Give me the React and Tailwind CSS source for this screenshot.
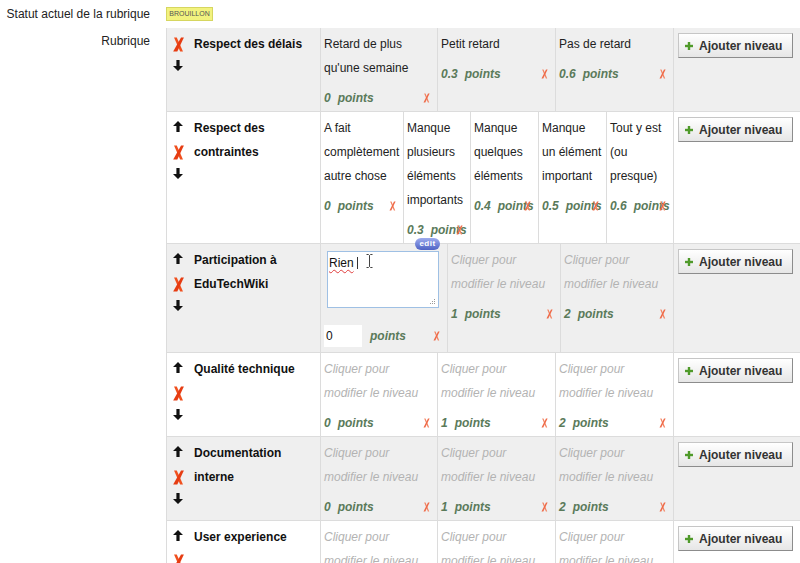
import React from "react";

const BigX = () => (
  <svg width="11" height="15" viewBox="0 0 11 15">
    <path d="M1 0.6 L3.8 0.6 L10 14.4 L7.2 14.4 Z" fill="#f0501e" />
    <path d="M8 0.4 L10.9 0.4 L4.3 14.6 L0.2 14.6 Z" fill="#e63c12" />
  </svg>
);

const SmallX = () => (
  <svg width="7" height="10" viewBox="0 0 7 10">
    <path d="M1.2 0.5 L2.5 0.5 L6.2 9.5 L4.9 9.5 Z" fill="#f3805e" />
    <path d="M5 0.5 L6.6 0.5 L2.3 9.5 L0.5 9.5 Z" fill="#ef6a48" />
  </svg>
);

const UpArrow = () => (
  <svg width="10" height="11" viewBox="0 0 10 11">
    <path d="M5 0 L10 5 L6.6 5 L6.6 11 L3.4 11 L3.4 5 L0 5 Z" fill="#111" />
  </svg>
);

const DownArrow = () => (
  <svg width="10" height="11" viewBox="0 0 10 11">
    <path d="M5 11 L10 6 L6.6 6 L6.6 0 L3.4 0 L3.4 6 L0 6 Z" fill="#111" />
  </svg>
);

const Plus = () => (
  <svg width="8" height="8" viewBox="0 0 8 8">
    <rect x="2.8" y="0" width="2.4" height="8" fill="#4f9a2a" />
    <rect x="0" y="2.8" width="8" height="2.4" fill="#4f9a2a" />
  </svg>
);

const IBeam = () => (
  <svg width="7" height="14" viewBox="0 0 7 14">
    <path
      d="M0.5 0.5 H2.5 L3.5 1.5 L4.5 0.5 H6.5 M3.5 1.5 V12.5 M0.5 13.5 H2.5 L3.5 12.5 L4.5 13.5 H6.5"
      stroke="#444"
      fill="none"
      strokeWidth="1"
    />
  </svg>
);

const Grip = () => (
  <svg width="6" height="6" viewBox="0 0 6 6">
    <rect x="4" y="0" width="1" height="1" fill="#999" />
    <rect x="2" y="2" width="1" height="1" fill="#999" />
    <rect x="4" y="2" width="1" height="1" fill="#999" />
    <rect x="0" y="4" width="1" height="1" fill="#999" />
    <rect x="2" y="4" width="1" height="1" fill="#999" />
    <rect x="4" y="4" width="1" height="1" fill="#999" />
  </svg>
);

const PH = ["Cliquer pour", "modifier le niveau"];

const rows = [
  {
    name: ["Respect des délais"],
    up: false,
    gray: true,
    levels: [
      { w: "w-[117px]", lines: ["Retard de plus", "qu'une semaine"], p: "0" },
      { w: "w-[118px]", lines: ["Petit retard"], p: "0.3" },
      { w: "w-[118px]", lines: ["Pas de retard"], p: "0.6" },
    ],
  },
  {
    name: ["Respect des", "contraintes"],
    up: true,
    gray: false,
    levels: [
      { w: "w-[83px]", lines: ["A fait", "complètement", "autre chose"], p: "0" },
      { w: "w-[67px]", lines: ["Manque", "plusieurs", "éléments", "importants"], p: "0.3" },
      { w: "w-[68px]", lines: ["Manque", "quelques", "éléments"], p: "0.4" },
      { w: "w-[68px]", lines: ["Manque", "un élément", "important"], p: "0.5" },
      { w: "w-[67px]", lines: ["Tout y est", "(ou", "presque)"], p: "0.6" },
    ],
  },
  {
    name: ["Participation à", "EduTechWiki"],
    up: true,
    gray: true,
    edit: true,
    levels: [
      { w: "w-[113px]", lines: PH, p: "1", ph: true },
      { w: "w-[113px]", lines: PH, p: "2", ph: true },
    ],
  },
  {
    name: ["Qualité technique"],
    up: true,
    gray: false,
    levels: [
      { w: "w-[117px]", lines: PH, p: "0", ph: true },
      { w: "w-[118px]", lines: PH, p: "1", ph: true },
      { w: "w-[118px]", lines: PH, p: "2", ph: true },
    ],
  },
  {
    name: ["Documentation", "interne"],
    up: true,
    gray: true,
    levels: [
      { w: "w-[117px]", lines: PH, p: "0", ph: true },
      { w: "w-[118px]", lines: PH, p: "1", ph: true },
      { w: "w-[118px]", lines: PH, p: "2", ph: true },
    ],
  },
  {
    name: ["User experience"],
    up: true,
    gray: false,
    levels: [
      { w: "w-[117px]", lines: PH, p: "0", ph: true },
      { w: "w-[118px]", lines: PH, p: "1", ph: true },
      { w: "w-[118px]", lines: PH, p: "2", ph: true },
    ],
  },
];

function Points({ value }) {
  return (
    <div className="relative mt-[6px] h-[24px] leading-[24px] whitespace-nowrap font-bold italic text-[#5a7a5a]">
      <span>{value}</span>
      <span className="ml-[7px]">points</span>
      <span className="absolute right-[7px] top-[7px] flex">
        <SmallX />
      </span>
    </div>
  );
}

function LevelCell({ level }) {
  return (
    <div className={`${level.w} shrink-0 border-r border-[#dcdcdc] pl-[3px] pt-[4px] pb-[1px]`}>
      <div className={`leading-[24px] whitespace-nowrap ${level.ph ? "italic text-[#b3b3b3]" : "text-[#222]"}`}>
        {level.lines.map((l, i) => (
          <div key={i}>{l}</div>
        ))}
      </div>
      <Points value={level.p} />
    </div>
  );
}

function EditCell() {
  return (
    <div className="relative w-[127px] shrink-0 border-r border-[#dcdcdc] pl-[3px] pt-[7px] pb-[5px]">
      <div className="absolute right-[7px] top-[-6px] h-[12px] w-[25px] rounded-full bg-linear-to-b from-[#9eabee] to-[#4f62c4] text-center text-[8px] font-bold leading-[12px] tracking-[0.5px] text-white">
        edit
      </div>
      <div className="relative ml-[3px] h-[57px] w-[112px] border border-[#9fc0e4] bg-white">
        <div className="flex items-center pl-[1px] pt-[3px] text-[12px] leading-[16px] text-[#111]">
          <span className="underline decoration-wavy decoration-[#e03c3c] decoration-[1px] underline-offset-[2px]">
            Rien
          </span>
          <span className="ml-[3px] inline-block h-[12px] w-[1px] bg-[#333]" />
          <span className="ml-[8px] mt-[-4px] flex">
            <IBeam />
          </span>
        </div>
        <span className="absolute bottom-[2px] right-[2px] flex">
          <Grip />
        </span>
      </div>
      <div className="relative mt-[17px] flex h-[22px] items-center">
        <div className="h-[22px] w-[38px] bg-white pl-[2px] text-[12px] leading-[22px] text-[#111]">0</div>
        <span className="ml-[8px] font-bold italic text-[#5a7a5a]">points</span>
        <span className="absolute right-[7px] top-[6px] flex">
          <SmallX />
        </span>
      </div>
    </div>
  );
}

function Row({ row }) {
  const slots = [];
  if (row.up) slots.push("up");
  slots.push("x");
  slots.push("down");
  return (
    <div className={`flex border-b border-[#dcdcdc] ${row.gray ? "bg-[#efefef]" : "bg-white"}`}>
      <div className="flex w-[154px] shrink-0 border-r border-[#dcdcdc] pl-[6px] pt-[4px]">
        <div className="flex w-[21px] shrink-0 flex-col">
          {slots.map((s, i) => (
            <div key={i} className="flex h-[24px] items-center">
              {s === "up" && (
                <span className="mb-[4px] flex">
                  <UpArrow />
                </span>
              )}
              {s === "x" && (
                <span className="flex">
                  <BigX />
                </span>
              )}
              {s === "down" && (
                <span className="mb-[5px] flex">
                  <DownArrow />
                </span>
              )}
            </div>
          ))}
        </div>
        <div className="whitespace-nowrap font-bold leading-[24px] text-[#111]">
          {row.name.map((n, i) => (
            <div key={i}>{n}</div>
          ))}
        </div>
      </div>
      <div className="flex">
        {row.edit && <EditCell />}
        {row.levels.map((l, i) => (
          <LevelCell key={i} level={l} />
        ))}
      </div>
      <div className="flex-1 pl-[4px] pt-[5px]">
        <button className="flex h-[25px] w-[115px] items-center border border-[#c6c6c6] border-b-[#8c8c8c] border-r-[#8c8c8c] bg-linear-to-b from-white to-[#e6e6e6] pl-[6px] text-[12px] font-bold text-[#333]">
          <Plus />
          <span className="ml-[6px]">Ajouter niveau</span>
        </button>
      </div>
    </div>
  );
}

export default function App() {
  return (
    <div className="w-[800px] overflow-hidden bg-white font-['Liberation_Sans',Arial,sans-serif] text-[12px] text-[#222]">
      <div className="flex h-[28px] items-center">
        <div className="w-[150px] text-right">Statut actuel de la rubrique</div>
        <div className="ml-[16px] flex h-[14px] w-[47px] items-center justify-center border border-[#d6d660] bg-[#f2f27e] text-[7px] text-[#555]">
          BROUILLON
        </div>
      </div>
      <div className="flex">
        <div className="w-[150px] shrink-0 pt-[5px] text-right leading-[16px]">Rubrique</div>
        <div className="ml-[16px] flex-1 border-l border-[#dcdcdc]">
          {rows.map((r, i) => (
            <Row key={i} row={r} />
          ))}
        </div>
      </div>
    </div>
  );
}
